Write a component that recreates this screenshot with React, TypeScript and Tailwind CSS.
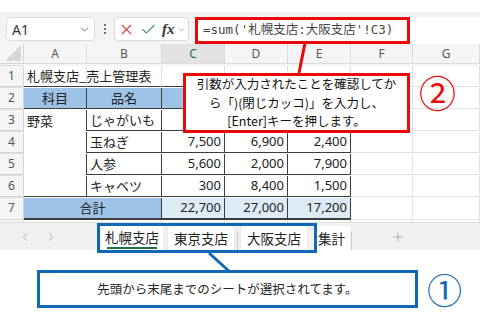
import { ChevronDown, ChevronLeft, ChevronRight, Plus, X, Check } from 'lucide-react';

const jp = { fontFamily: '"Noto Sans CJK JP", sans-serif' };
const num = { fontFamily: '"Noto Sans", "Noto Sans CJK JP", sans-serif' };

const cols = ['A', 'B', 'C', 'D', 'E', 'F', 'G'];
const grid = 'grid grid-cols-[24px_63px_75px_63px_63px_63px_62px_1fr]';

type CellProps = {
  text?: string;
  cls?: string;
  right?: boolean;
  center?: boolean;
  span?: string;
};

function Cell({ text = '', cls = '', right, center, span = '' }: CellProps) {
  const align = right ? 'justify-end pr-[3px]' : center ? 'justify-center' : 'justify-start pl-[3px]';
  return (
    <div className={`flex items-center text-[13px] text-[#222] whitespace-nowrap overflow-visible ${align} ${span} ${cls}`} style={right ? num : jp}>
      {text}
    </div>
  );
}

const g = 'border-r border-b border-[#e1e1e1]';
const d = 'border-r border-b border-[#3d3d3d]';
const top = 'border-r border-b border-b-[#3d3d3d] border-r-[#e1e1e1]';

export default function App() {
  const rows = [
    { n: 1, cells: [
      <Cell key="a" text="札幌支店_売上管理表" cls={top} />,
      <Cell key="b" cls={top} />,
      <Cell key="c" cls={top} />,
      <Cell key="d" cls={top} />,
      <Cell key="e" cls={top} />,
      <Cell key="f" cls={g} />,
      <Cell key="g" cls={g} />,
      <Cell key="h" cls={g} />,
    ] },
    { n: 2, cells: [
      <Cell key="a" text="科目" center cls={`${d} bg-[#9dc3e6]`} />,
      <Cell key="b" text="品名" center cls={`${d} bg-[#9dc3e6]`} />,
      <Cell key="c" cls={`${d} bg-[#9dc3e6]`} />,
      <Cell key="d" cls={`${d} bg-[#9dc3e6]`} />,
      <Cell key="e" cls={`${d} bg-[#9dc3e6]`} />,
      <Cell key="f" cls={g} />,
      <Cell key="g" cls={g} />,
      <Cell key="h" cls={g} />,
    ] },
    { n: 3, cells: [
      <Cell key="a" text="野菜" cls="border-r border-[#3d3d3d]" />,
      <Cell key="b" text="じゃがいも" cls={d} />,
      <Cell key="c" cls={d} />,
      <Cell key="d" cls={d} />,
      <Cell key="e" cls={d} />,
      <Cell key="f" cls={g} />,
      <Cell key="g" cls={g} />,
      <Cell key="h" cls={g} />,
    ] },
    ...[
      ['玉ねぎ', '7,500', '6,900', '2,400'],
      ['人参', '5,600', '2,000', '7,900'],
      ['キャベツ', '300', '8,400', '1,500'],
    ].map((r, i) => ({
      n: 4 + i,
      cells: [
        <Cell key="a" cls={i === 2 ? d : 'border-r border-[#3d3d3d]'} />,
        <Cell key="b" text={r[0]} cls={d} />,
        <Cell key="c" text={r[1]} right cls={d} />,
        <Cell key="d" text={r[2]} right cls={d} />,
        <Cell key="e" text={r[3]} right cls={d} />,
        <Cell key="f" cls={g} />,
        <Cell key="g" cls={g} />,
        <Cell key="h" cls={g} />,
      ],
    })),
    { n: 7, cells: [
      <Cell key="a" text="合計" center span="col-span-2" cls={`${d} bg-[#9dc3e6] border-b-2`} />,
      <Cell key="c" text="22,700" right cls={`${d} bg-[#ddebf7] border-b-2`} />,
      <Cell key="d" text="27,000" right cls={`${d} bg-[#ddebf7] border-b-2`} />,
      <Cell key="e" text="17,200" right cls={`${d} bg-[#ddebf7] border-b-2`} />,
      <Cell key="f" cls={g} />,
      <Cell key="g" cls={g} />,
      <Cell key="h" cls={g} />,
    ] },
  ];

  return (
    <div className="relative w-[480px] h-[312px] overflow-hidden bg-white" style={jp}>
      {/* formula toolbar */}
      <div className="h-[12px] bg-white" />
      <div className="flex items-start h-[32px] bg-[#f3f3f3] pt-[5px] pl-[6px]">
        <div className="flex items-center justify-between w-[89px] h-[24px] bg-white rounded-[4px] border border-[#dcdcdc] pl-[5px] pr-[3px]">
          <span className="text-[14px] text-[#333]" style={num}>A1</span>
          <ChevronDown size={13} strokeWidth={1.6} className="text-[#555]" />
        </div>
        <div className="flex flex-col items-center justify-center gap-[2px] w-[19px] h-[24px]">
          <span className="w-[2px] h-[2px] bg-[#444] rounded-full" />
          <span className="w-[2px] h-[2px] bg-[#444] rounded-full" />
          <span className="w-[2px] h-[2px] bg-[#444] rounded-full" />
        </div>
        <div className="flex items-center w-[75px] h-[24px] bg-white rounded-[4px] border border-[#dcdcdc] pl-[3px] gap-[5px]">
          <X size={17} strokeWidth={1.5} className="text-[#e23a3a]" />
          <Check size={17} strokeWidth={1.5} className="text-[#3a9a5a]" />
          <span className="flex items-center">
            <span className="text-[15px] italic font-bold text-[#333]" style={{ fontFamily: '"Liberation Serif", serif' }}>fx</span>
            <ChevronDown size={11} strokeWidth={1.4} className="text-[#888] ml-[1px]" />
          </span>
        </div>
        <div className="flex-1 h-[27px] ml-[6px] bg-white flex">
          <div className="w-[215px] h-[27px] border-[3px] border-[#e60a0a] flex items-center pl-[5px]">
            <span className="text-[12.5px] text-[#444] whitespace-nowrap" style={{ fontFamily: '"DejaVu Sans Mono", "Noto Sans CJK JP", monospace' }}>
              =sum('札幌支店:大阪支店'!C3)
            </span>
          </div>
        </div>
      </div>

      {/* column headers */}
      <div className={`${grid} h-[22px] bg-[#f5f5f5]`}>
        <div className="relative border-r border-b border-[#d4d4d4]">
          <div className="absolute right-[2px] bottom-[2px] w-0 h-0 border-l-[16px] border-l-transparent border-b-[16px] border-b-[#d6d6d6]" />
        </div>
        {cols.map(c => (
          <div
            key={c}
            className={`flex items-center justify-center text-[12px] border-r border-b border-[#dadada] ${c === 'C' ? 'bg-[#e2e2e2] text-[#1e7145]' : 'text-[#555]'}`}
            style={num}
          >
            {c}
          </div>
        ))}
        <div className="border-b border-[#dadada]" />
      </div>

      {/* rows */}
      {rows.map(r => (
        <div key={r.n} className={`${grid} h-[22px]`}>
          <div className="flex items-center justify-center text-[12px] text-[#555] bg-[#f5f5f5] border-r border-b border-[#d4d4d4]" style={num}>
            {r.n}
          </div>
          {r.cells}
        </div>
      ))}
      <div className={`${grid} h-[2px]`}>
        <div className="bg-[#f5f5f5] border-r border-[#d4d4d4]" />
        {cols.map(c => <div key={c} className="border-r border-[#e1e1e1]" />)}
      </div>

      {/* sheet tabs */}
      <div className="flex items-center h-[28px] bg-[#f0f0f0] border-t border-[#e0e0e0]">
        <div className="flex items-center gap-[12px] pl-[18px] w-[101px] text-[#a0a0a0]">
          <ChevronLeft size={14} strokeWidth={1.4} />
          <ChevronRight size={14} strokeWidth={1.4} />
        </div>
        <div className="flex items-end h-full pt-[3px]">
          <div className="flex flex-col items-center justify-center w-[62px] h-full bg-white text-[13.5px] text-[#222]">
            <span className="leading-[18px]">札幌支店</span>
            <span className="w-[50px] h-[2px] bg-[#1e7145] mt-[1px]" />
          </div>
          <div className="w-[5px]" />
          <div className="flex items-center justify-center w-[66px] h-full bg-white rounded-t-[3px] shadow-[0_0_1px_#bbb] text-[13.5px] text-[#222]">東京支店</div>
          <div className="w-[7px] flex justify-center"><span className="w-px h-[18px] bg-[#ccc]" /></div>
          <div className="flex items-center justify-center w-[66px] h-full bg-white rounded-t-[3px] shadow-[0_0_1px_#bbb] text-[13.5px] text-[#222]">大阪支店</div>
          <div className="w-[6px]" />
          <div className="flex items-center justify-center w-[37px] h-full bg-white text-[13.5px] text-[#222]">集計</div>
          <div className="w-[3px] flex justify-center"><span className="w-px h-[18px] bg-[#ccc]" /></div>
        </div>
        <div className="flex-1 flex justify-start pl-[38px] text-[#999]">
          <Plus size={14} strokeWidth={1.3} />
        </div>
      </div>

      {/* callout 1 (bottom) */}
      <div className="h-[62px] pl-[37px] pt-[20px]">
        <div className="flex items-center justify-center w-[381px] h-[38px] border-[3px] border-[#1268b8] text-[12.5px] text-[#222]">
          先頭から末尾までのシートが選択されてます。
        </div>
      </div>

      {/* overlays */}
      <span className="absolute left-[423px] top-[268px] px-[4px] whitespace-nowrap text-[35px] leading-[42px] text-[#1268b8]">①</span>
      <div className="absolute left-[97px] top-[223px] w-[220px] h-[30px] border-[3px] border-[#1268b8]" />
      <div className="absolute left-[183px] top-[73px] w-[227px] h-[60px] border-[3px] border-[#e60a0a] bg-white flex flex-col items-center justify-center text-[12.5px] leading-[18.5px] text-[#111]">
        <span>引数が入力されたことを確認してか</span>
        <span>ら「)(閉じカッコ)」を入力し、</span>
        <span>[Enter]キーを押します。</span>
      </div>
      <span className="absolute left-[419px] top-[74px] text-[37px] leading-none text-[#e60a0a]">②</span>
      <svg className="absolute left-0 top-0 pointer-events-none" width="480" height="312">
        <line x1="305" y1="43" x2="299" y2="73" stroke="#e60a0a" strokeWidth="3" />
        <line x1="209" y1="253" x2="230" y2="272" stroke="#1268b8" strokeWidth="3" />
      </svg>
    </div>
  );
}
